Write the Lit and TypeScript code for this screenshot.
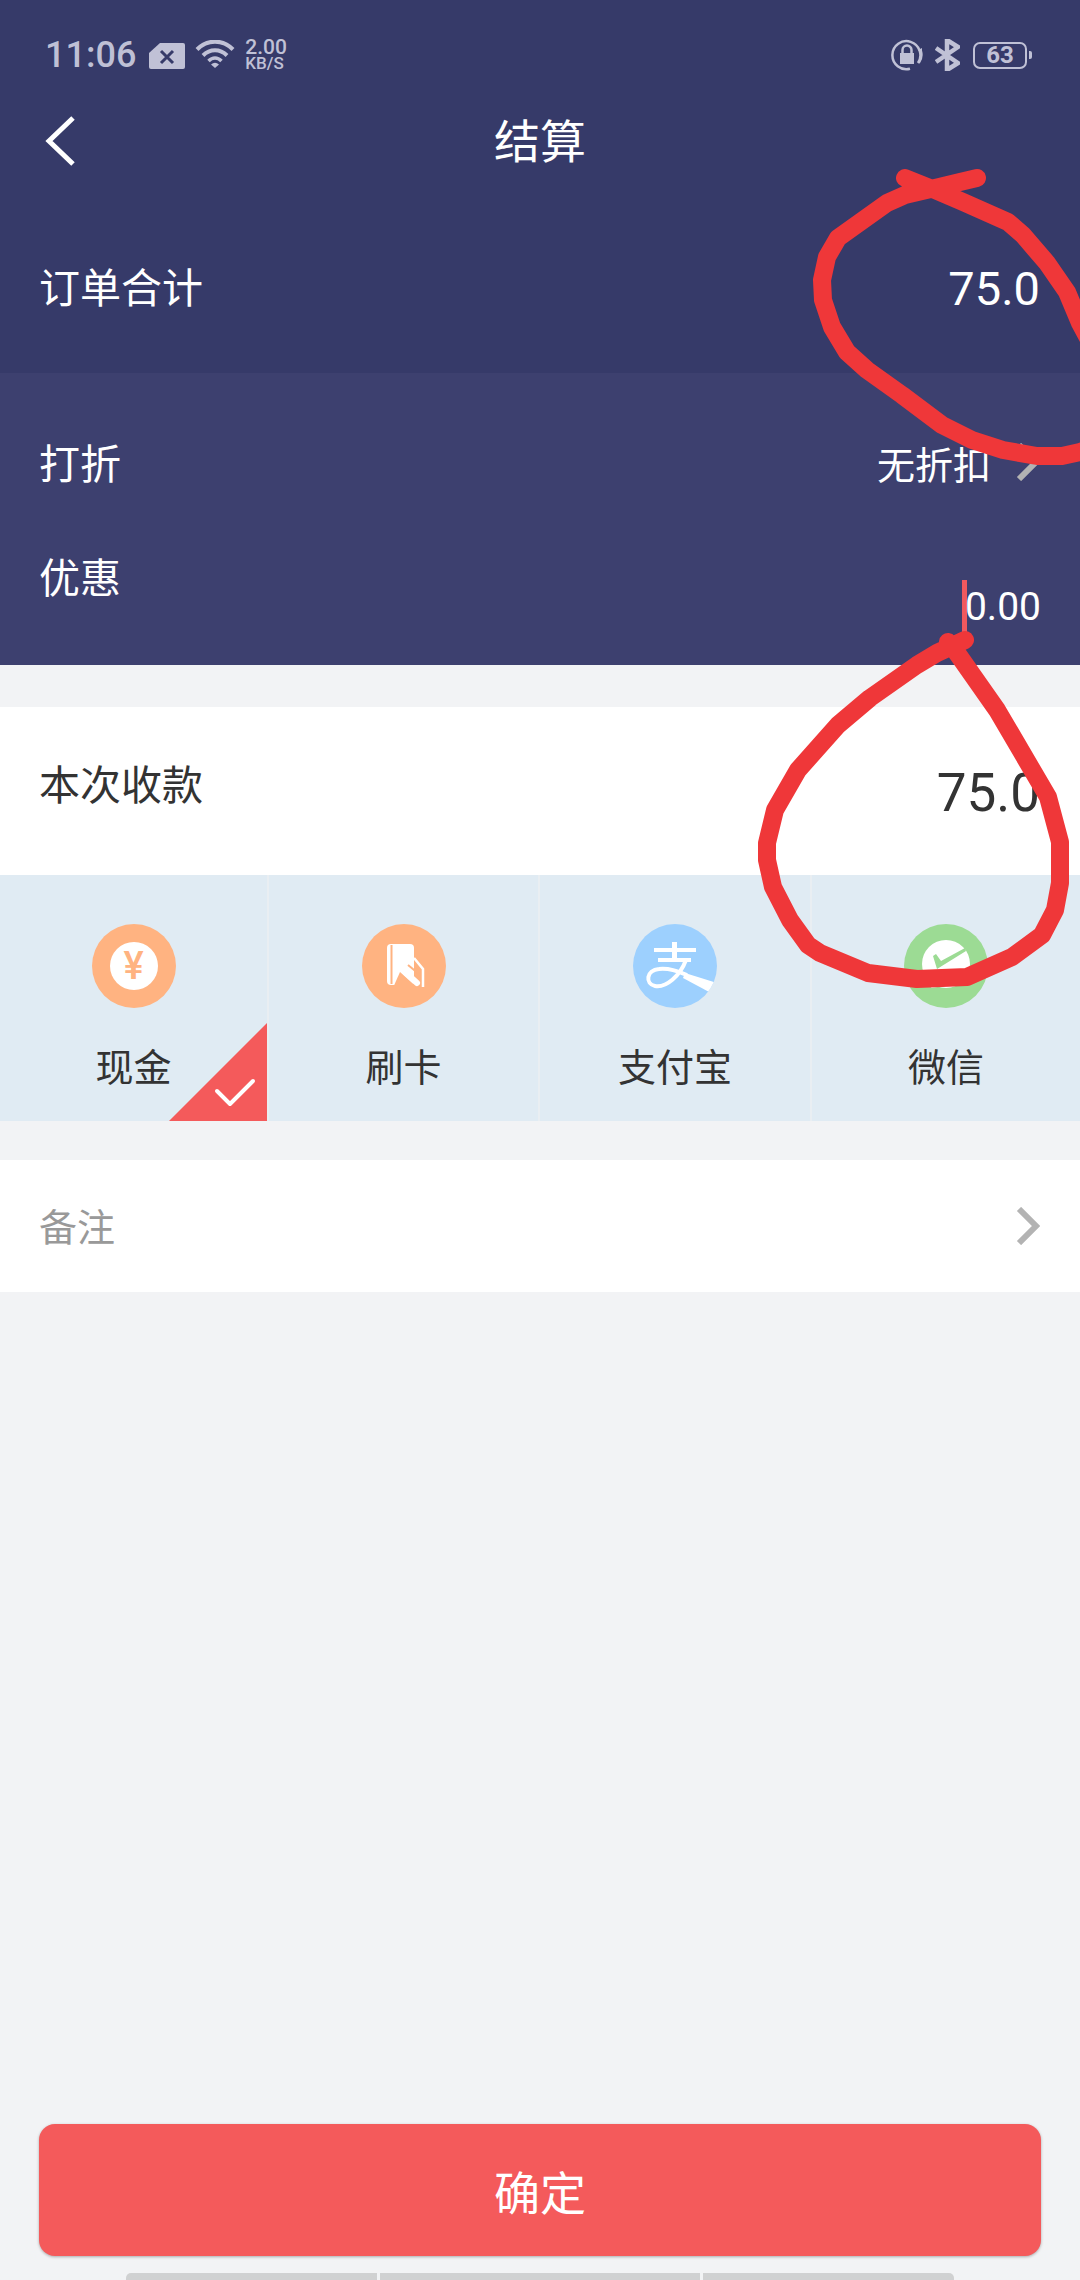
import { LitElement, html, css } from "lit";
import { customElement } from "lit/decorators.js";

const chevron = html`<svg class="chev" viewBox="0 0 24 38" width="24" height="38"><polyline points="3,2 20,19 3,36" fill="none" stroke="#b3b3b3" stroke-width="6"/></svg>`;

@customElement("app-root")
export class AppRoot extends LitElement {
  static styles = css`
    :host {
      display: block;
      position: relative;
      width: 1080px;
      height: 2280px;
      overflow: hidden;
      background: #f2f3f5;
      font-family: Roboto, "Noto Sans CJK SC", sans-serif;
      color: #333;
    }
    .page { display: flex; flex-direction: column; height: 2280px; }
    .top { background: #363a69; height: 373px; color: #fff; display: flex; flex-direction: column; }
    .status {
      height: 91px; box-sizing: border-box; padding: 39px 48px 20px 45px;
      display: flex; justify-content: space-between; align-items: center; color: #c0c1d6;
    }
    .status-group { display: flex; align-items: center; }
    .time { font-size: 36px; line-height: 32px; font-weight: 500; color: #bfc0d5; }
    .sim { margin-left: 13px; margin-top: 2px; }
    .wifi { margin-left: 10px; margin-top: -2px; }
    .speed { margin-left: 10px; display: flex; flex-direction: column; font-weight: 500; }
    .speed b { font-weight: 500; font-size: 21px; line-height: 17px; }
    .speed i { font-style: normal; font-size: 17px; line-height: 15px; }
    .bt { margin-left: 12px; }
    .battery {
      margin-left: 13px; width: 54px; height: 27px; box-sizing: border-box;
      border: 2px solid #c0c1d6; border-radius: 7px;
      display: flex; align-items: center; justify-content: center;
      font-size: 24px; font-weight: 700; line-height: 23px;
    }
    .tip { margin-left: 2px; width: 3px; height: 8px; background: #c0c1d6; border-radius: 0 2px 2px 0; }
    .nav { height: 100px; display: grid; grid-template-columns: 1fr auto 1fr; align-items: center; padding-left: 45px; padding-right: 45px; }
    .title { font-size: 46px; line-height: 60px; margin-top: 2px; }
    .total {
      flex: 1; padding: 14px 40px 0 39px; display: flex; justify-content: space-between; align-items: center;
      font-size: 41px;
    }
    .total .lbl { margin-bottom: 8px; }
    .total .amt { font-size: 47px; line-height: 56px; }
    .disc { background: #3d406f; height: 292px; color: #fff; display: flex; flex-direction: column; }
    .disc-row { padding: 0 40px 0 39px; display: flex; justify-content: space-between; }
    .disc-a { height: 178px; align-items: center; font-size: 41px; }
    .disc-a .lbl { margin-bottom: 2px; }
    .disc-b { flex: 1; align-items: flex-start; font-size: 41px; line-height: 54px; }
    .disc-b .lbl { margin-top: 1px; }
    .pick { display: flex; align-items: center; gap: 25px; font-size: 38px; }
    .input { margin-top: 29px; margin-right: -1px; display: flex; align-items: center; height: 53px; font-size: 39px; line-height: 56px; }
    .caret { flex: none; width: 5px; height: 53px; margin-right: -2px; background: #f0595e; }
    .pay {
      margin-top: 42px; height: 168px; background: #fff; padding: 0 40px 0 39px;
      display: flex; justify-content: space-between; font-size: 41px;
    }
    .pay .lbl { margin-top: 52px; line-height: 54px; }
    .pay .amt { margin-top: 50px; line-height: 72px; font-size: 53px; }
    .tiles {
      height: 246px; display: grid; grid-template-columns: 267px 269px 270px 1fr; gap: 2px; background: #e9eef2;
    }
    .tile {
      position: relative; background: #e0ebf3; display: flex; flex-direction: column; align-items: center;
      padding-top: 49px; overflow: hidden;
    }
    .disc-icon { width: 84px; height: 84px; display: block; }
    .round {
      width: 84px; height: 84px; border-radius: 50%; background: #ffb381;
      display: flex; align-items: center; justify-content: center;
    }
    .coin {
      width: 48px; height: 48px; border-radius: 50%; background: #fff; color: #ffb381;
      display: flex; align-items: center; justify-content: center;
      font-size: 38px; line-height: 48px; font-weight: 500;
    }
    .tile-name { margin-top: 38px; font-size: 38px; line-height: 44px; color: #333; }
    .mark { position: absolute; right: 0; bottom: 0; display: block; }
    .note {
      margin-top: 39px; height: 132px; box-sizing: border-box; background: #fff; padding: 0 40px 0 39px;
      display: flex; justify-content: space-between; align-items: center; font-size: 38px; color: #999;
    }
    .note .lbl { margin-bottom: 3px; }
    .spacer { flex: 1; }
    .confirm {
      margin: 0 39px 0 39px; height: 132px; border-radius: 16px; background: #f45a5b; color: #fff;
      display: flex; align-items: center; justify-content: center; font-size: 46px;
      box-shadow: 0 1px 3px rgba(0, 0, 0, 0.3);
    }
    .bars { margin: 17px 126px 0; height: 7px; display: flex; gap: 3px; }
    .bars span { background: #d0d1d2; }
    .bars span:nth-child(1) { width: 251px; border-radius: 5px 0 0 0; }
    .bars span:nth-child(2) { width: 320px; }
    .bars span:nth-child(3) { width: 251px; border-radius: 0 5px 0 0; }
    .ink { position: absolute; left: 0; top: 0; pointer-events: none; }
  `;

  render() {
    return html`
      <div class="page">
        <div class="top">
          <div class="status">
            <div class="status-group">
              <span class="time">11:06</span>
              <svg class="sim" width="36" height="26" viewBox="0 0 36 26">
                <path d="M11 0H34a2 2 0 0 1 2 2V24a2 2 0 0 1-2 2H2a2 2 0 0 1-2-2V10Z" fill="#c0c1d6"/>
                <path d="M12 8L24 20M24 8L12 20" stroke="#363a69" stroke-width="3" fill="none"/>
              </svg>
              <svg class="wifi" width="40" height="28" viewBox="0 0 40 28">
                <path d="M2 9.500C12-1 28-1 38 9.500" fill="none" stroke="#c0c1d6" stroke-width="4"/>
                <path d="M8 15.500C15 8.500 25 8.500 32 15.500" fill="none" stroke="#c0c1d6" stroke-width="4"/>
                <path d="M13.500 21C17.500 17 22.500 17 26.500 21" fill="none" stroke="#c0c1d6" stroke-width="3.500"/>
                <path d="M16 24.500Q20 21 24 24.500L20 28Z" fill="#c0c1d6"/>
              </svg>
              <div class="speed"><b>2.00</b><i>KB/S</i></div>
            </div>
            <div class="status-group">
              <svg width="32" height="32" viewBox="0 0 32 32">
                <path d="M27 24A14 14 0 1 0 19 29.700" fill="none" stroke="#c0c1d6" stroke-width="2.500"/>
                <path d="M30 11.500A14.500 14.500 0 0 1 28 24" fill="none" stroke="#c0c1d6" stroke-width="2"/>
                <path d="M27 11L31 15L31 9Z" fill="#c0c1d6"/>
                <rect x="9" y="14" width="14" height="11" fill="#c0c1d6"/>
                <path d="M11.500 14V11a4.500 4.500 0 0 1 9 0V14" fill="none" stroke="#c0c1d6" stroke-width="2.500"/>
              </svg>
              <svg class="bt" width="25" height="32" viewBox="0 0 25 32">
                <path d="M1 9L23 24L12 31V1L23 8L1 23" fill="none" stroke="#c0c1d6" stroke-width="4.500"/>
              </svg>
              <div class="battery">63</div>
              <div class="tip"></div>
            </div>
          </div>
          <div class="nav">
            <svg width="32" height="50" viewBox="0 0 32 50">
              <polyline points="28,2 4,25 28,48" fill="none" stroke="#fff" stroke-width="5"/>
            </svg>
            <div class="title">结算</div>
            <div></div>
          </div>
          <div class="total"><span class="lbl">订单合计</span><span class="amt">75.0</span></div>
        </div>

        <div class="disc">
          <div class="disc-row disc-a">
            <span class="lbl">打折</span>
            <span class="pick">无折扣 ${chevron}</span>
          </div>
          <div class="disc-row disc-b">
            <span class="lbl">优惠</span>
            <span class="input"><span class="caret"></span>0.00</span>
          </div>
        </div>

        <div class="pay"><span class="lbl">本次收款</span><span class="amt">75.0</span></div>

        <div class="tiles">
          <div class="tile">
            <div class="round"><div class="coin">¥</div></div>
            <div class="tile-name">现金</div>
            <svg class="mark" width="98" height="98" viewBox="0 0 98 98">
              <path d="M98 0V98H0Z" fill="#f45a5b"/>
              <polyline points="48,68 61,81 84,58" fill="none" stroke="#fff" stroke-width="4" stroke-linecap="round" stroke-linejoin="round"/>
            </svg>
          </div>
          <div class="tile">
            <svg class="disc-icon" viewBox="0 0 84 84">
              <circle cx="42" cy="42" r="42" fill="#ffb381"/>
              <rect x="25" y="20" width="27" height="41" rx="4" fill="#fff"/>
              <path d="M29.500 21V60" stroke="#ffb381" stroke-width="2" fill="none"/>
              <path d="M52 34L61 45V63" stroke="#fff" stroke-width="2.500" fill="none"/>
              <path d="M38 48L58 66H30Z" fill="#ffb381"/>
              <path d="M42 47L55 59" stroke="#fff" stroke-width="6" stroke-linecap="round" fill="none"/>
              <path d="M46 41L57 50" stroke="#ffb381" stroke-width="2" fill="none"/>
            </svg>
            <div class="tile-name">刷卡</div>
          </div>
          <div class="tile">
            <svg class="disc-icon" viewBox="0 0 84 84">
              <defs><clipPath id="ali"><circle cx="42" cy="42" r="42"/></clipPath></defs>
              <circle cx="42" cy="42" r="42" fill="#9dd0fe"/>
              <g clip-path="url(#ali)" fill="none" stroke="#fff">
                <path d="M21 26H63" stroke-width="4"/>
                <path d="M41.500 18V36" stroke-width="5"/>
                <path d="M25 36H58" stroke-width="4"/>
                <path d="M53 36C47 52 33 64 22 62C12 60 13 46 26 45C36 44 44 47 54 51" stroke-width="4"/>
                <path d="M52 49L84 59L78 69L50 54Z" fill="#fff" stroke="none"/>
              </g>
            </svg>
            <div class="tile-name">支付宝</div>
          </div>
          <div class="tile">
            <svg class="disc-icon" viewBox="0 0 84 84">
              <circle cx="42" cy="42" r="42" fill="#9cdb94"/>
              <circle cx="42" cy="40" r="24" fill="#fff"/>
              <path d="M27 64L31 55L40 62Z" fill="#fff"/>
              <path d="M29 32L33 45L62 27L61 24L37 37L32 30Z" fill="#9cdb94"/>
            </svg>
            <div class="tile-name">微信</div>
          </div>
        </div>

        <div class="note"><span class="lbl">备注</span>${chevron}</div>
        <div class="spacer"></div>
        <div class="confirm">确定</div>
        <div class="bars"><span></span><span></span><span></span></div>
      </div>

      <svg class="ink" width="1080" height="2280" viewBox="0 0 1080 2280" fill="none" stroke="#ef3739" stroke-width="18" stroke-linecap="round" stroke-linejoin="round">
        <polyline points="905,178 935,190 963,202 1008,222 1023,235 1047,263 1067,292 1080,323 1100,360 1100,445 1080,452 1062,456 1037,456 1003,450 972,440 942,425 902,395 867,370 847,352 832,327 823,300 822,280 827,257 838,238 887,203 905,195 935,188 960,182 977,178"/>
        <polyline points="948,642 957,653 997,710 1048,797 1060,842 1060,883 1055,910 1042,935 1012,957 967,977 917,979 868,973 820,953 808,945 790,920 773,887 767,860 767,843 775,810 798,770 838,725 870,698 917,665 937,653 965,640"/>
      </svg>
    `;
  }
}
